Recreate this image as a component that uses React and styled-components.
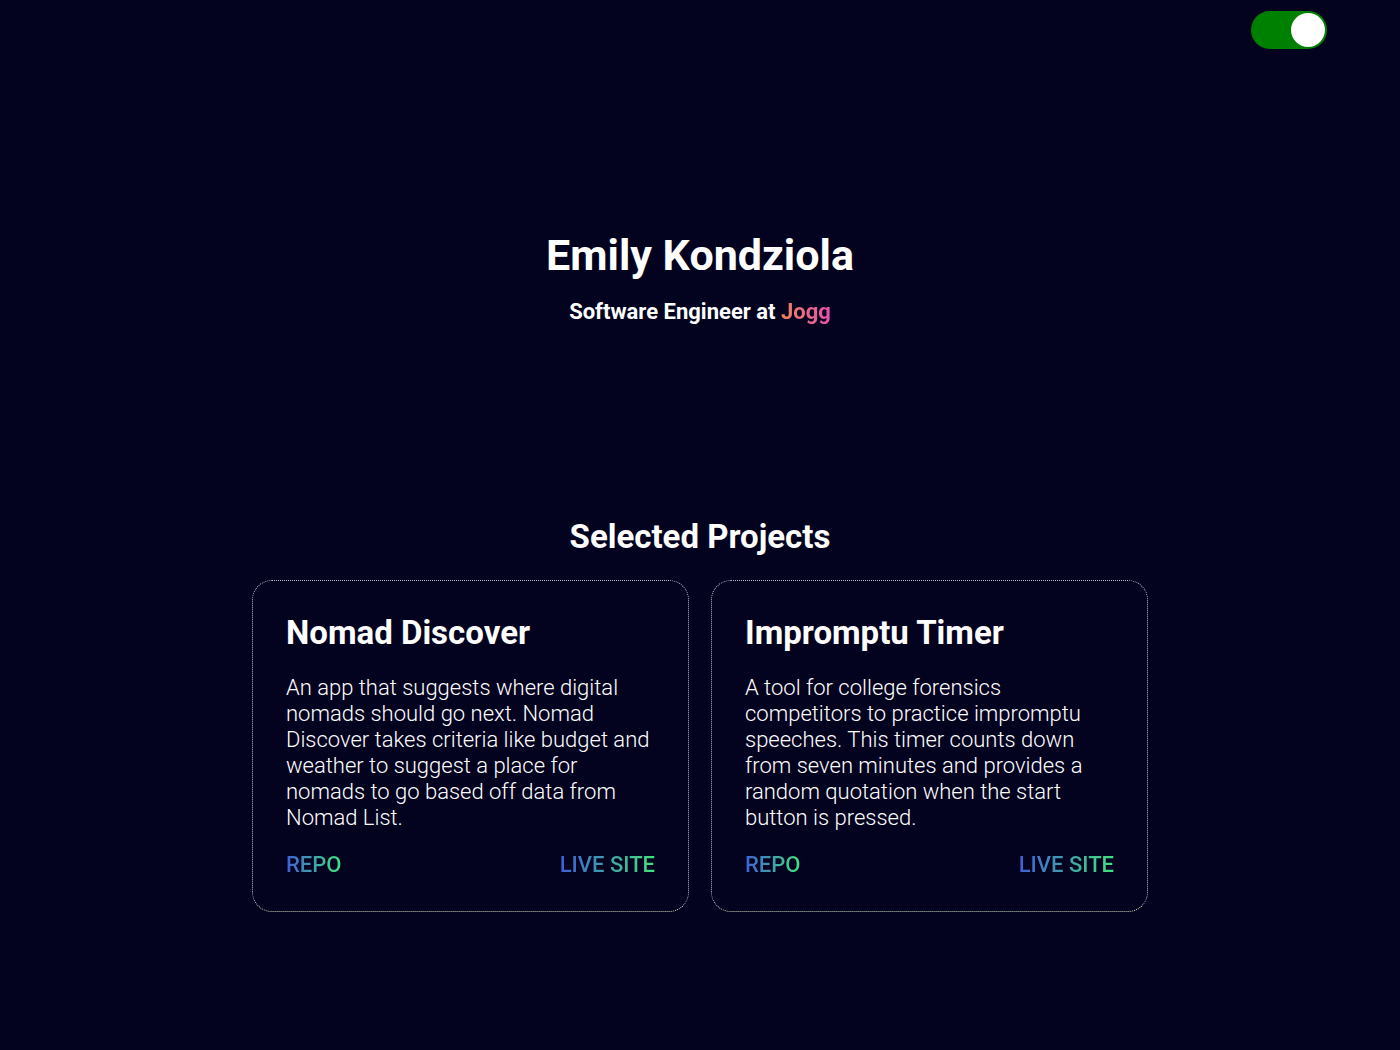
import React, { useState } from 'react';
import styled, { createGlobalStyle } from 'styled-components';

const GlobalStyle = createGlobalStyle`
  html, body {
    margin: 0;
    padding: 0;
    background: #03021f;
  }
  body {
    font-family: Roboto, "Noto Sans", sans-serif;
    color: #ffffff;
    min-height: 1050px;
  }
`;

const Page = styled.div`
  min-height: 1050px;
  background: #03021f;
  display: flex;
  flex-direction: column;
  align-items: center;
`;

const TopBar = styled.div`
  align-self: stretch;
  display: flex;
  justify-content: flex-end;
  padding: 11px 73px 0 0;
`;

const Toggle = styled.button`
  width: 76px;
  height: 38px;
  border-radius: 19px;
  border: none;
  padding: 2px;
  background: ${props => (props.on ? '#008000' : '#555')};
  display: flex;
  justify-content: ${props => (props.on ? 'flex-end' : 'flex-start')};
  align-items: center;
  cursor: pointer;
`;

const Knob = styled.span`
  width: 34px;
  height: 34px;
  border-radius: 50%;
  background: #ffffff;
`;

const Hero = styled.header`
  margin-top: 180px;
  display: flex;
  flex-direction: column;
  align-items: center;
`;

const Name = styled.h1`
  margin: 0;
  font-size: 43px;
  font-weight: 700;
  line-height: 52px;
`;

const Role = styled.p`
  margin: 18px 0 0;
  font-size: 22px;
  font-weight: 700;
  line-height: 26px;
`;

const Gradient = styled.span`
  background: ${props => props.colors};
  -webkit-background-clip: text;
  background-clip: text;
  color: transparent;
`;

const Section = styled.section`
  margin-top: 193px;
  display: flex;
  flex-direction: column;
  align-items: center;
`;

const SectionTitle = styled.h2`
  margin: 0;
  font-size: 33px;
  font-weight: 700;
  line-height: 38px;
`;

const Grid = styled.div`
  margin-top: 24px;
  display: grid;
  grid-template-columns: 437px 437px;
  gap: 22px;
`;

const Card = styled.article`
  box-sizing: border-box;
  height: 332px;
  border: 1px dotted #b8b6d8;
  border-bottom-color: #c8e0b8;
  border-radius: 20px;
  padding: 33px 33px 0;
  display: flex;
  flex-direction: column;
`;

const CardTitle = styled.h3`
  margin: 0;
  font-size: 33px;
  font-weight: 700;
  line-height: 38px;
`;

const CardText = styled.p`
  margin: 23px 0 0;
  font-size: 22px;
  font-weight: 300;
  line-height: 26px;
  color: #ffffff;
`;

const Links = styled.div`
  margin-top: 21px;
  display: flex;
  justify-content: space-between;
`;

const LinkText = styled.a`
  font-size: 22px;
  font-weight: 500;
  line-height: 26px;
  text-decoration: none;
  background: linear-gradient(90deg, #3f5fd6, #41e27e);
  -webkit-background-clip: text;
  background-clip: text;
  color: transparent;
`;

const projects = [
  {
    title: 'Nomad Discover',
    text:
      'An app that suggests where digital nomads should go next. Nomad Discover takes criteria like budget and weather to suggest a place for nomads to go based off data from Nomad List.',
  },
  {
    title: 'Impromptu Timer',
    text:
      'A tool for college forensics competitors to practice impromptu speeches. This timer counts down from seven minutes and provides a random quotation when the start button is pressed.',
  },
];

const App = () => {
  const [dark, setDark] = useState(true);

  return (
    <Page>
      <GlobalStyle />
      <TopBar>
        <Toggle on={dark ? 1 : 0} onClick={() => setDark(d => !d)} aria-label="Toggle theme">
          <Knob />
        </Toggle>
      </TopBar>

      <Hero>
        <Name>Emily Kondziola</Name>
        <Role>
          Software Engineer at{' '}
          <Gradient colors="linear-gradient(90deg, #f0845a, #e94fb0)">Jogg</Gradient>
        </Role>
      </Hero>

      <Section>
        <SectionTitle>Selected Projects</SectionTitle>
        <Grid>
          {projects.map(p => (
            <Card key={p.title}>
              <CardTitle>{p.title}</CardTitle>
              <CardText>{p.text}</CardText>
              <Links>
                <LinkText href="#">REPO</LinkText>
                <LinkText href="#">LIVE SITE</LinkText>
              </Links>
            </Card>
          ))}
        </Grid>
      </Section>
    </Page>
  );
};

export default App;
